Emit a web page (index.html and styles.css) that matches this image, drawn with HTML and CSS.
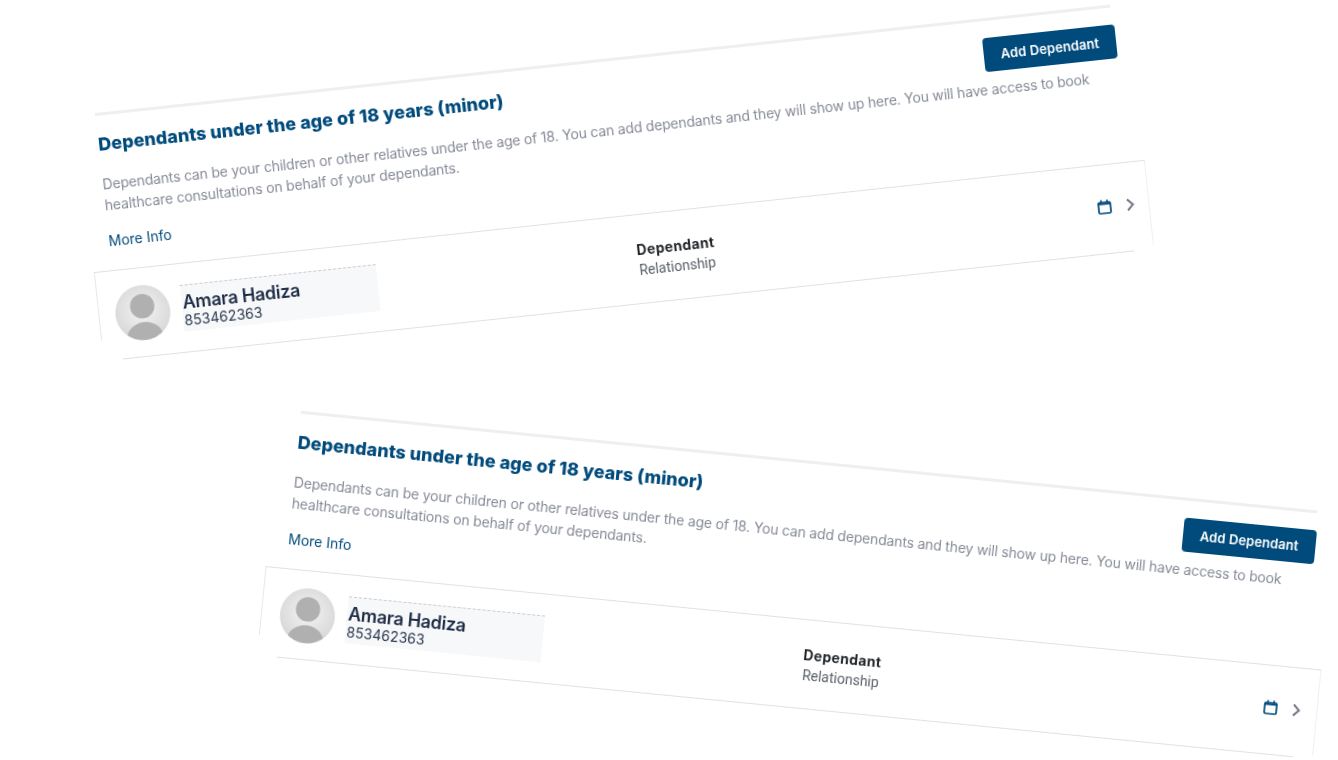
FILE: index.html
```html
<!DOCTYPE html>
<html lang="en">
<head>
<meta charset="utf-8">
<title>Dependants</title>
<link rel="stylesheet" href="styles.css">
</head>
<body>
<main class="canvas">
  <section class="panel panel-top">
    <div class="intro">
      <header class="intro-head">
        <h2 class="title">Dependants under the age of 18 years (minor)</h2>
        <button class="add-btn" type="button">Add Dependant</button>
      </header>
      <p class="desc">Dependants can be your children or other relatives under the age of 18. You can add dependants and they will show up here. You will have access to book healthcare consultations on behalf of your dependants.</p>
      <a class="more" href="#">More Info</a>
    </div>
    <div class="row">
      <svg class="avatar" viewBox="0 0 55 55" aria-hidden="true">
        <defs>
          <radialGradient id="ga" cx="50%" cy="45%" r="55%"><stop offset="0" stop-color="#f4f4f4"/><stop offset="1" stop-color="#d8d8d8"/></radialGradient>
          <clipPath id="ca"><circle cx="27.5" cy="27.5" r="27.5"/></clipPath>
        </defs>
        <circle cx="27.5" cy="27.5" r="27.5" fill="url(#ga)"/>
        <circle cx="27.5" cy="21" r="12.2" fill="#b0b0b0"/>
        <ellipse cx="27.5" cy="52" rx="18" ry="15" fill="#b0b0b0" clip-path="url(#ca)"/>
      </svg>
      <div class="who">
        <div class="name">Amara Hadiza</div>
        <div class="num">853462363</div>
      </div>
      <div class="rel">
        <div class="rel-title">Dependant</div>
        <div class="rel-sub">Relationship</div>
      </div>
      <div class="actions">
        <svg class="cal" viewBox="0 0 14 15" aria-hidden="true"><rect x="1" y="3" width="12" height="11" rx="1.2" fill="none" stroke="#004b7c" stroke-width="1.7"/><path d="M1 4.5h12" stroke="#004b7c" stroke-width="2"/><path d="M4 .5v3M10 .5v3" stroke="#004b7c" stroke-width="1.5"/></svg>
        <svg class="chev" viewBox="0 0 10 14" aria-hidden="true"><path d="M2 1.5 7.5 7 2 12.5" fill="none" stroke="#6b7280" stroke-width="1.9"/></svg>
      </div>
    </div>
  </section>

  <section class="panel panel-bottom">
    <div class="intro">
      <header class="intro-head">
        <h2 class="title">Dependants under the age of 18 years (minor)</h2>
        <button class="add-btn" type="button">Add Dependant</button>
      </header>
      <p class="desc">Dependants can be your children or other relatives under the age of 18. You can add dependants and they will show up here. You will have access to book healthcare consultations on behalf of your dependants.</p>
      <a class="more" href="#">More Info</a>
    </div>
    <div class="row">
      <svg class="avatar" viewBox="0 0 55 55" aria-hidden="true">
        <defs>
          <radialGradient id="gb" cx="50%" cy="45%" r="55%"><stop offset="0" stop-color="#f4f4f4"/><stop offset="1" stop-color="#d8d8d8"/></radialGradient>
          <clipPath id="cb"><circle cx="27.5" cy="27.5" r="27.5"/></clipPath>
        </defs>
        <circle cx="27.5" cy="27.5" r="27.5" fill="url(#gb)"/>
        <circle cx="27.5" cy="21" r="12.2" fill="#b0b0b0"/>
        <ellipse cx="27.5" cy="52" rx="18" ry="15" fill="#b0b0b0" clip-path="url(#cb)"/>
      </svg>
      <div class="who">
        <div class="name">Amara Hadiza</div>
        <div class="num">853462363</div>
      </div>
      <div class="rel">
        <div class="rel-title">Dependant</div>
        <div class="rel-sub">Relationship</div>
      </div>
      <div class="actions">
        <svg class="cal" viewBox="0 0 14 15" aria-hidden="true"><rect x="1" y="3" width="12" height="11" rx="1.2" fill="none" stroke="#004b7c" stroke-width="1.7"/><path d="M1 4.5h12" stroke="#004b7c" stroke-width="2"/><path d="M4 .5v3M10 .5v3" stroke="#004b7c" stroke-width="1.5"/></svg>
        <svg class="chev" viewBox="0 0 10 14" aria-hidden="true"><path d="M2 1.5 7.5 7 2 12.5" fill="none" stroke="#6b7280" stroke-width="1.9"/></svg>
      </div>
    </div>
  </section>
</main>
</body>
</html>
```
FILE: styles.css
```css
* { box-sizing: border-box; }
html, body { margin: 0; height: 100%; background: #fff; overflow: hidden; }
.canvas { position: relative; width: 1338px; height: 760px; overflow: hidden; font-family: "Inter", "Liberation Sans", sans-serif; }
.panel { position: absolute; width: 1057px; transform-origin: 0 0; filter: blur(0.3px); }
.panel-top { left: 76.5px; top: 115px; transform: rotate(-6.1deg); }
.panel-bottom { left: 283px; top: 409px; width: 1059px; transform: rotate(5.6deg); }
.panel-bottom .row { margin-left: -2px; padding-left: 19px; padding-right: 16px; }
.intro { margin-left: 18px; width: 1021px; height: 158px; border-top: 3px solid #efefef; padding-top: 17px; }
.intro-head { display: flex; justify-content: space-between; align-items: center; height: 34px; }
.title { margin: 0 0 12px; font-size: 18px; font-weight: 800; color: #004b7c; letter-spacing: 0.05px; white-space: nowrap; }
.add-btn { flex: none; width: 133px; height: 34px; margin-right: -2px; border: 0; border-radius: 4px; background: #004b7c; color: #fff; font: 600 13px "Inter", sans-serif; letter-spacing: 0.1px; }
.desc { margin: 7px 0 0; width: 1010px; font-size: 14px; line-height: 21px; color: #868b97; letter-spacing: -0.17px; }
.more { display: block; margin-top: 15px; font-size: 14px; line-height: 21px; color: #004b7c; text-decoration: none; }
.row { display: flex; align-items: center; height: 90px; padding: 0 14px 0 17px; border-top: 1px solid #dfe1e4;
  background:
    linear-gradient(#e6e7ea, #e6e7ea) left top / 1px 68px no-repeat,
    linear-gradient(#f0f0f1, #f0f0f1) right top / 1px 85px no-repeat,
    linear-gradient(#dfe1e4, #dfe1e4) center bottom / calc(100% - 40px) 1px no-repeat; }
.avatar { width: 55px; height: 55px; flex: none; }
.who { flex: none; width: 197px; height: 47px; margin-left: 12px; padding: 7px 1px 0; background: #f7f8fa; border-top: 1px dashed #c8cbd0; }
.name { font-size: 18px; line-height: 20px; font-weight: 600; color: #1f2d45; letter-spacing: -0.3px; }
.num { font-size: 14px; line-height: 16px; color: #2d3a50; letter-spacing: 0.05px; }
.rel { flex: none; margin-left: 261px; text-align: center; }
.rel-title { font-size: 14px; line-height: 20px; font-weight: 700; color: #212529; letter-spacing: 0.35px; }
.rel-sub { font-family: "Roboto", sans-serif; font-size: 14px; line-height: 20px; color: #5a6068; }
.actions { margin-left: auto; display: flex; align-items: center; gap: 14px; margin-top: -6px; }
.cal { width: 14px; height: 15px; }
.chev { width: 10px; height: 14px; }
```
